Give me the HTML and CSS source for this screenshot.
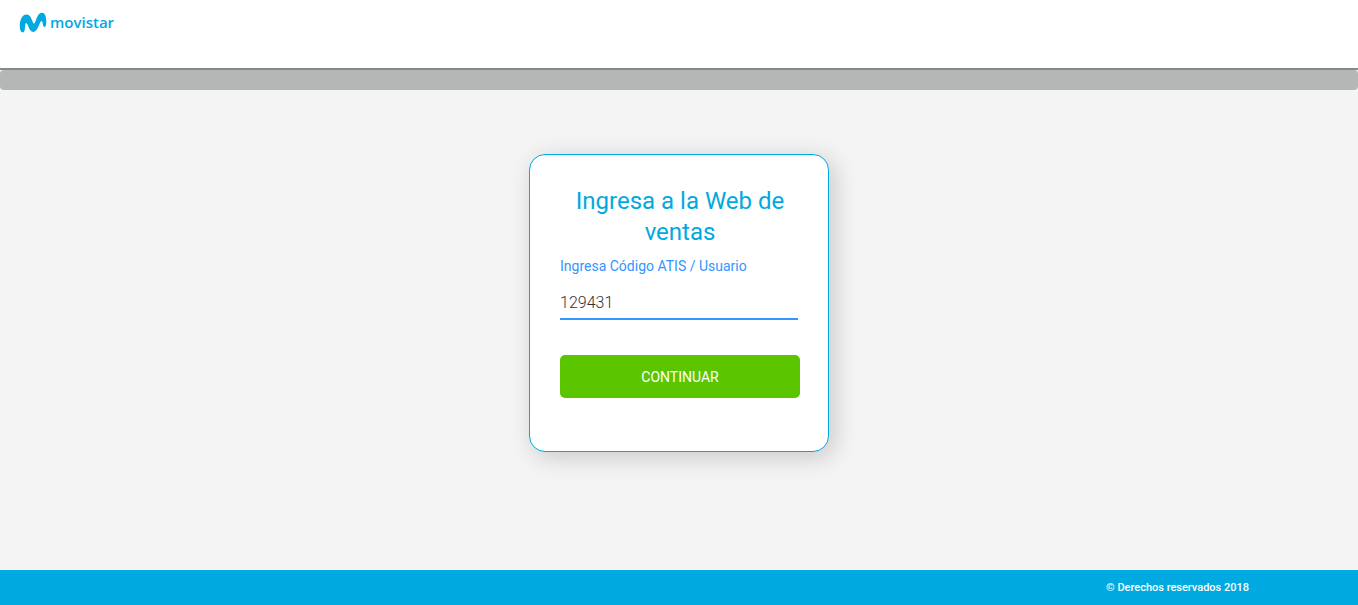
FILE: index.html
```html
<!DOCTYPE html>
<html lang="es">
<head>
<meta charset="utf-8">
<meta name="viewport" content="width=device-width, initial-scale=1">
<title>Movistar - Web de ventas</title>
<link rel="stylesheet" href="styles.css">
</head>
<body class="page">
<header class="header">
  <div class="logo">
    <svg class="logo-mark" viewBox="0 0 28 21" aria-hidden="true">
      <path d="M3.800 20.500C1.800 20.300.9 18 .8 14.500C.7 8 3 2.600 7.400 2.400C10.800 2.300 12 5.500 13.200 8.500C14 10.600 14.300 11.600 15 11.600C16.600 11.600 17.800.8 22.600.7C25.800.6 27.200 4 27.300 9C27.300 12.400 26.900 15 25.500 15C23.400 15 24.200 9 22.600 9C20.600 9 19 20 14.200 20C10 20 9 11 7.200 11C5.200 11 7 20.800 3.800 20.500Z"/>
    </svg>
    <span class="logo-name">movistar</span>
  </div>
</header>
<div class="strip"></div>
<main class="main">
  <form class="card">
    <h1 class="title">Ingresa a la Web de ventas</h1>
    <label class="label" for="user">Ingresa Código ATIS / Usuario</label>
    <input class="input" id="user" type="text" value="129431">
    <button class="button" type="button">CONTINUAR</button>
  </form>
</main>
<footer class="footer">© Derechos reservados 2018</footer>
</body>
</html>
```
FILE: styles.css
```css
* {
  box-sizing: border-box;
}

.page {
  display: flex;
  flex-direction: column;
  min-height: 100vh;
  margin: 0;
  background: #f4f4f4;
  font-family: Roboto, sans-serif;
}

.header {
  height: 70px;
  padding: 12px 19px;
  background: #fff;
  border-bottom: 2px solid #86888c;
}

.logo {
  display: flex;
  align-items: flex-start;
  gap: 3px;
  color: #00a9e0;
}

.logo-mark {
  width: 28px;
  height: 21px;
  fill: currentColor;
}

.logo-name {
  font: 600 15px/20px "Open Sans", sans-serif;
}

.strip {
  height: 20px;
  background: #b4b7b5;
  border-radius: 4px;
}

.main {
  flex: 1;
  display: flex;
  justify-content: center;
  align-items: flex-start;
  padding: 64px 16px;
}

.card {
  display: flex;
  flex-direction: column;
  width: 300px;
  padding: 31px 28px 53px 30px;
  background: #fff;
  border: 1px solid #00a9e0;
  border-radius: 16px;
  box-shadow: 5px 5px 25px rgba(0, 0, 0, 0.18);
}

.title {
  margin: 0 0 8px;
  color: #00a9e0;
  font: 400 24px/31px Roboto, sans-serif;
  text-align: center;
}

.label {
  color: #3395ff;
  font: 400 14px/20px Roboto, sans-serif;
}

.input {
  width: 238px;
  height: 35px;
  margin: 9px 0 35px;
  padding: 2px 0 0;
  border: 0;
  border-bottom: 2px solid #3395ff;
  outline: 0;
  background: transparent;
  color: #333;
  font: 300 16px/20px Roboto, sans-serif;
}

.button {
  height: 43px;
  padding: 0;
  border: 0;
  border-radius: 5px;
  background: #5bc500;
  color: #fff;
  font: 400 14px/20px Roboto, sans-serif;
}

.footer {
  padding: 8px 109px 7px 16px;
  background: #00a9e0;
  color: #fff;
  font: 500 11px/20px Roboto, sans-serif;
  text-align: right;
}
```
